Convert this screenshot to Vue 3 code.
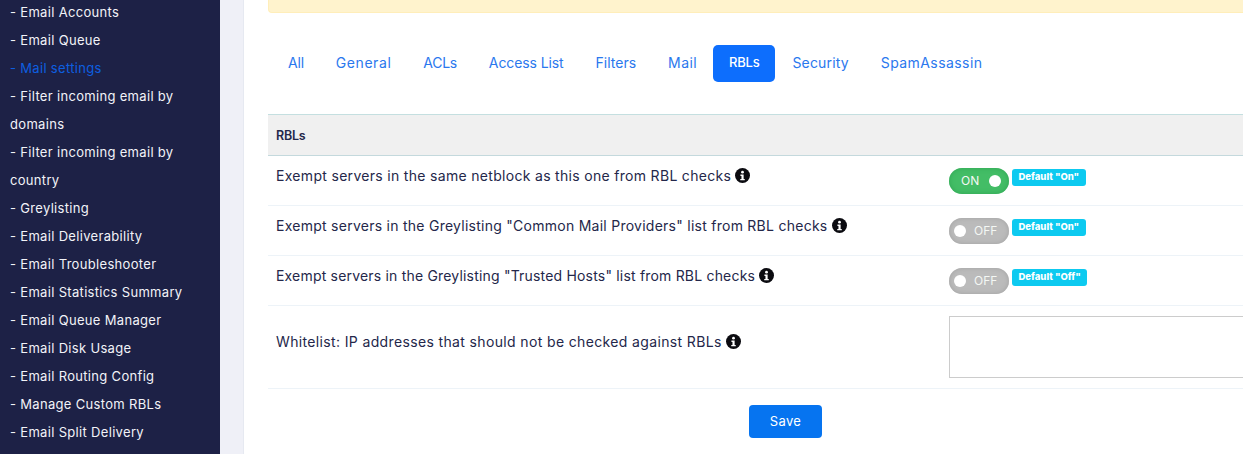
<script setup>
const menu = [
  { label: '- Email Accounts' },
  { label: '- Email Queue' },
  { label: '- Mail settings', active: true },
  { label: '- Filter incoming email by domains' },
  { label: '- Filter incoming email by country' },
  { label: '- Greylisting' },
  { label: '- Email Deliverability' },
  { label: '- Email Troubleshooter' },
  { label: '- Email Statistics Summary' },
  { label: '- Email Queue Manager' },
  { label: '- Email Disk Usage' },
  { label: '- Email Routing Config' },
  { label: '- Manage Custom RBLs' },
  { label: '- Email Split Delivery' },
]
const tabs = [
  { name: 'All', ls: -0.2 },
  { name: 'General', ls: 0.56 },
  { name: 'ACLs', ls: -0.3 },
  { name: 'Access List', ls: -0.1 },
  { name: 'Filters', ls: 0 },
  { name: 'Mail', ls: 0.42 },
  { name: 'RBLs', ls: -0.25 },
  { name: 'Security', ls: 0.17 },
  { name: 'SpamAssassin', ls: 0.42 },
]
const rows = [
  { text: 'Exempt servers in the same netblock as this one from RBL checks', on: true, def: 'Default "On"', ls: 0.31 },
  { text: 'Exempt servers in the Greylisting "Common Mail Providers" list from RBL checks', on: false, def: 'Default "On"', ls: 0.26 },
  { text: 'Exempt servers in the Greylisting "Trusted Hosts" list from RBL checks', on: false, def: 'Default "Off"', ls: 0.19 },
]
</script>

<template>
  <div class="page">
    <aside class="sidebar">
      <ul class="menu">
        <li v-for="m in menu" :key="m.label" :class="{ active: m.active }">{{ m.label }}</li>
      </ul>
    </aside>
    <div class="gutter"></div>
    <main class="panel">
      <div class="alert"></div>
      <nav class="tabs">
        <a v-for="t in tabs" :key="t.name" :class="['tab', { current: t.name === 'RBLs' }]" :style="{ letterSpacing: t.ls + 'px' }">{{ t.name }}</a>
      </nav>
      <section class="table">
        <div class="head">RBLs</div>
        <div v-for="r in rows" :key="r.text" class="row">
          <div class="label">
            <span :style="{ letterSpacing: r.ls + 'px' }">{{ r.text }}</span>
            <svg class="info" viewBox="0 0 16 16"><circle cx="8" cy="8" r="8" fill="#0b0b10"/><circle cx="8" cy="4.4" r="1.5" fill="#fff"/><path d="M5.8 7h3.4v4.6h1.2v1.4H5.6v-1.4h1.3V8.4H5.8z" fill="#fff"/></svg>
          </div>
          <div class="control">
            <div :class="['switch', r.on ? 'on' : 'off']">
              <span class="knob"></span>
              <span class="state">{{ r.on ? 'ON' : 'OFF' }}</span>
            </div>
            <span class="badge">{{ r.def }}</span>
          </div>
        </div>
        <div class="row tall">
          <div class="label">
            <span class="wl">Whitelist: IP addresses that should not be checked against RBLs</span>
            <svg class="info" viewBox="0 0 16 16"><circle cx="8" cy="8" r="8" fill="#0b0b10"/><circle cx="8" cy="4.4" r="1.5" fill="#fff"/><path d="M5.8 7h3.4v4.6h1.2v1.4H5.6v-1.4h1.3V8.4H5.8z" fill="#fff"/></svg>
          </div>
          <div class="control">
            <div class="area"></div>
          </div>
        </div>
      </section>
      <div class="actions">
        <button class="save">Save</button>
      </div>
    </main>
  </div>
</template>

<style>
html, body { margin: 0; background: #fff; }
</style>

<style scoped>
.page {
  display: flex;
  width: 1243px;
  height: 454px;
  overflow: hidden;
  font-family: "Inter", "Open Sans", sans-serif;
  font-size: 13px;
}
.sidebar {
  width: 220px;
  flex: none;
  background: #1d2146;
  overflow: hidden;
}
.menu {
  list-style: none;
  margin: -2px 0 0;
  padding: 0 10px;
  color: #f2f3f8;
  line-height: 28px;
  font-size: 13px;
  letter-spacing: 0.32px;
}
.menu .active { color: #0d5fe0; }
.gutter {
  width: 23px;
  flex: none;
  background: #eff0f7;
  border-right: 1px solid #e6e9f1;
}
.panel {
  flex: 1;
  min-width: 0;
  padding: 0 0 0 24px;
  background: #fff;
  overflow: hidden;
}
.alert {
  height: 12px;
  background: #fff3cd;
  border: 1px solid #ffeeba;
  border-top: 0;
  border-right: 0;
  border-bottom-left-radius: 4px;
}
.tabs {
  display: flex;
  margin-top: 32px;
  padding-left: 4px;
  height: 37px;
}
.tab {
  display: flex;
  align-items: center;
  padding: 0 16px 3px;
  border-radius: 5px;
  color: #2a78ee;
  font-size: 14px;
}
.tab.current {
  margin-right: 1px;
  background: #0d6efd;
  color: #fff;
  font-weight: 500;
  font-size: 13px;
}
.table {
  margin-top: 32px;
  border-top: 1px solid #c4dfe0;
  color: #24274a;
}
.head {
  height: 40px;
  padding-left: 8px;
  display: flex;
  align-items: center;
  background: #f0f0f0;
  border-bottom: 1px solid #c4d9dd;
  font-weight: 600;
  font-size: 12.5px;
  letter-spacing: -0.2px;
}
.row {
  display: flex;
  height: 49px;
  border-bottom: 1px solid #edf3f8;
  font-size: 14px;
}
.row.tall { height: 82px; }
.wl { letter-spacing: 0.36px; }
.label {
  width: 681px;
  flex: none;
  padding: 10px 0 0 8px;
  box-sizing: border-box;
  display: flex;
  align-items: flex-start;
  gap: 4px;
  line-height: 20px;
}
.row.tall .label { padding-top: 26px; }
.info {
  width: 15px;
  height: 15px;
  margin-top: 2px;
  flex: none;
}
.control {
  display: flex;
  align-items: flex-start;
  padding-top: 12px;
  gap: 3px;
  flex: 1;
}
.row.tall .control { padding-top: 10px; }
.switch {
  width: 60px;
  height: 26px;
  padding-bottom: 1px;
  border-radius: 13px;
  position: relative;
  display: flex;
  align-items: center;
  color: #f4f7f4;
  font-size: 12px;
  box-sizing: border-box;
}
.switch.on {
  background: #43bd66;
  box-shadow: inset 0 0 5px #2fa653;
}
.switch.off {
  background: #bbbbbb;
  box-shadow: inset 0 0 5px #a2a2a2;
}
.on .state { margin-left: 12px; }
.off .state { margin-left: 25px; }
.knob {
  position: absolute;
  top: 7px;
  width: 12px;
  height: 12px;
  border-radius: 50%;
  background: #fff;
}
.on .knob { right: 8px; }
.off .knob { left: 5px; }
.badge {
  height: 17px;
  margin-top: 1px;
  padding: 0 6.5px;
  border-radius: 3px;
  background: #0dcaf0;
  color: #fff;
  font-size: 9.5px;
  font-weight: 800;
  line-height: 16px;
  white-space: nowrap;
}
.area {
  width: 320px;
  height: 60px;
  border: 1px solid #ccc;
}
.actions {
  display: flex;
  margin-top: 16px;
  padding-left: 481px;
}
.save {
  width: 73px;
  height: 33px;
  padding-bottom: 2px;
  border: 0;
  border-radius: 4px;
  background: #0674f0;
  color: #fff;
  font: 400 13px "Inter", sans-serif;
  letter-spacing: 0.3px;
}
</style>
